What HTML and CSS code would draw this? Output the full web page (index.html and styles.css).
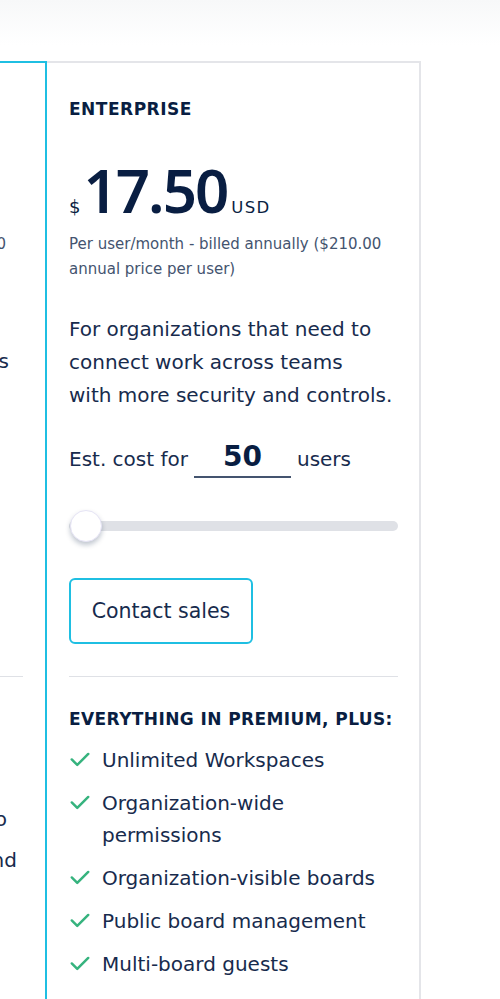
FILE: index.html
```html
<!DOCTYPE html>
<html lang="en">
<head>
<meta charset="utf-8">
<title>Pricing</title>
<link rel="stylesheet" href="styles.css">
</head>
<body>
<div class="page">
  <div class="row">
    <section class="card card-premium">
      <div class="pl pl-price">Per user/month - billed annually ($120.00</div>
      <div class="pl pl-desc">collaborative projects</div>
      <hr class="divider">
      <div class="pl pl-f1">Advanced checklists, to</div>
      <div class="pl pl-f2">admin and</div>
    </section>
    <section class="card card-enterprise">
      <h2 class="plan-name">ENTERPRISE</h2>
      <div class="price">
        <span class="currency">$</span><span class="amount">17.50</span><span class="unit">USD</span>
      </div>
      <p class="billing">Per user/month - billed annually ($210.00 annual price per user)</p>
      <p class="desc">For organizations that need to<br>connect work across teams<br>with more security and controls.</p>
      <div class="estimate">
        <span>Est. cost for</span>
        <span class="users-input">50</span>
        <span>users</span>
      </div>
      <div class="slider"><span class="thumb"></span></div>
      <button class="btn">Contact sales</button>
      <hr class="divider">
      <h3 class="features-title">EVERYTHING IN PREMIUM, PLUS:</h3>
      <ul class="features">
        <li><svg class="check" viewBox="0 0 24 24"><path d="M3 12.5l6 6L21 6.5" fill="none" stroke="#36b37e" stroke-width="2.7" stroke-linecap="round" stroke-linejoin="round"/></svg><span>Unlimited Workspaces</span></li>
        <li><svg class="check" viewBox="0 0 24 24"><path d="M3 12.5l6 6L21 6.5" fill="none" stroke="#36b37e" stroke-width="2.7" stroke-linecap="round" stroke-linejoin="round"/></svg><span>Organization-wide<br>permissions</span></li>
        <li><svg class="check" viewBox="0 0 24 24"><path d="M3 12.5l6 6L21 6.5" fill="none" stroke="#36b37e" stroke-width="2.7" stroke-linecap="round" stroke-linejoin="round"/></svg><span>Organization-visible boards</span></li>
        <li><svg class="check" viewBox="0 0 24 24"><path d="M3 12.5l6 6L21 6.5" fill="none" stroke="#36b37e" stroke-width="2.7" stroke-linecap="round" stroke-linejoin="round"/></svg><span>Public board management</span></li>
        <li><svg class="check" viewBox="0 0 24 24"><path d="M3 12.5l6 6L21 6.5" fill="none" stroke="#36b37e" stroke-width="2.7" stroke-linecap="round" stroke-linejoin="round"/></svg><span>Multi-board guests</span></li>
        <li><svg class="check" viewBox="0 0 24 24"><path d="M3 12.5l6 6L21 6.5" fill="none" stroke="#36b37e" stroke-width="2.7" stroke-linecap="round" stroke-linejoin="round"/></svg><span>Attachment permissions</span></li>
      </ul>
    </section>
  </div>
</div>
</body>
</html>
```

FILE: styles.css
```css
* { box-sizing: border-box; }
html, body { margin: 0; padding: 0; }
body {
  font-family: "DejaVu Sans", "Noto Sans", sans-serif;
  color: #172b4d;
  background: linear-gradient(#f7f8f9 0, #ffffff 45px) no-repeat, #ffffff;
  width: 500px;
  height: 999px;
  overflow: hidden;
}
.page { padding-top: 61px; }
.row {
  display: flex;
  justify-content: flex-end;
  padding-right: 79px;
}
.card {
  flex: 0 0 auto;
  background: #fff;
}
.card-premium {
  width: 440px;
  height: 1100px;
  border: 2px solid #1fbfe2;
  border-bottom: none;
  padding: 0 22px 0 22px;
  position: relative;
  z-index: 1;
}
.pl { white-space: nowrap; text-align: right; }
.pl-price { margin-top: 169px; font-size: 15px; line-height: 24px; color: #44546f; padding-right: 17px; }
.pl-desc { margin-top: 89px; font-size: 20px; line-height: 33px; padding-right: 14px; }
.card-premium .divider { margin: 298px 0 0 0; }
.pl-f1 { margin-top: 126px; font-size: 20px; line-height: 32px; padding-right: 16px; }
.pl-f2 { margin-top: 9px; font-size: 20px; line-height: 32px; padding-right: 6px; }

.card-enterprise {
  width: 374px;
  border: 2px solid #e4e5e9;
  border-left: none;
  border-bottom: none;
  padding: 34px 21px 0 22px;
  height: 1000px;
}
.plan-name {
  margin: 0;
  font-size: 17px;
  line-height: 24px;
  font-weight: 700;
  color: #091e42;
  letter-spacing: 0.5px;
}
.price {
  margin-top: 39px;
  display: flex;
  align-items: baseline;
  color: #091e42;
}
.currency { font-size: 18px; margin-right: 3px; }
.amount { font-family: "Noto Sans", sans-serif; font-size: 60px; font-weight: 600; line-height: 60px; letter-spacing: -2px; }
.unit { font-size: 16.5px; letter-spacing: 1.3px; margin-left: 4px; }
.billing {
  margin: 12px 0 0;
  font-size: 15px;
  line-height: 25px;
  color: #44546f;
}
.desc {
  margin: 31px 0 0;
  font-size: 20px;
  line-height: 33px;
  color: #172b4d;
}
.estimate {
  margin-top: 30px;
  display: flex;
  align-items: baseline;
  font-size: 20px;
  line-height: 30px;
  color: #172b4d;
}
.users-input {
  display: inline-block;
  width: 97px;
  margin: 0 6px 0 6px;
  text-align: center;
  font-size: 28px;
  font-weight: 700;
  color: #091e42;
  border-bottom: 2px solid #44546f;
  padding-bottom: 4px;
}
.slider {
  position: relative;
  margin-top: 43px;
  height: 10px;
  border-radius: 5px;
  background: #dfe1e6;
}
.thumb {
  position: absolute;
  left: 1px;
  top: -11px;
  width: 32px;
  height: 32px;
  border-radius: 50%;
  background: #fff;
  border: 1px solid #e6e4f5;
  box-shadow: 0 3px 5px rgba(9, 30, 66, 0.25);
}
.btn {
  display: block;
  margin-top: 47px;
  width: 184px;
  height: 66px;
  border: 2px solid #1fbfe2;
  border-radius: 6px;
  background: #fff;
  font-family: inherit;
  font-size: 20.5px;
  color: #172b4d;
  padding: 0;
}
.divider {
  border: none;
  border-top: 1px solid #dfe1e6;
  margin: 32px 0 0;
}
.features-title {
  margin: 30px 0 0;
  font-size: 17px;
  line-height: 24px;
  font-weight: 700;
  color: #091e42;
  letter-spacing: 0.4px;
  white-space: nowrap;
}
.features {
  list-style: none;
  margin: 13px 0 0;
  padding: 0;
}
.features li {
  display: flex;
  align-items: flex-start;
  font-size: 20px;
  line-height: 32px;
  margin-bottom: 11px;
  color: #172b4d;
}
.check {
  flex: 0 0 22px;
  width: 22px;
  height: 22px;
  margin: 4px 11px 0 0;
}
```
